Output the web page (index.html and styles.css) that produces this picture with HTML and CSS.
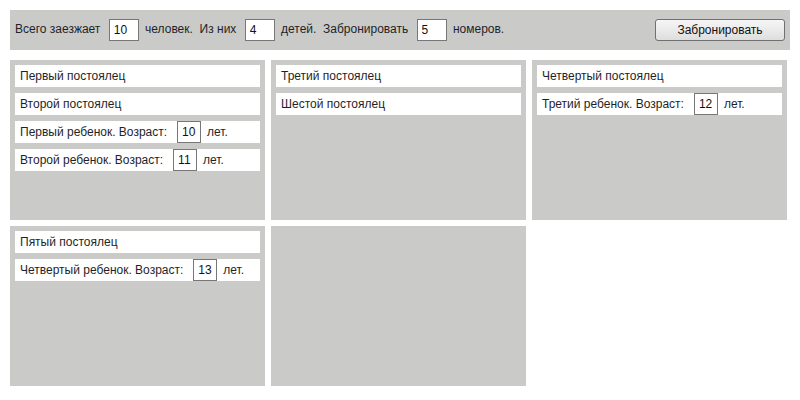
FILE: index.html
```html
<!DOCTYPE html>
<html lang="ru">

<head>
    <meta charset="UTF-8">
    <title>Бронирование</title>
    <link rel="stylesheet" href="styles.css">
</head>

<body>

    <div class="topbar">
        <div class="summary">
            Всего заезжает <input type="text" class="count" value="10"> человек.&nbsp; Из них
            <input type="text" class="count" value="4"> детей.&nbsp; Забронировать
            <input type="text" class="count" value="5"> номеров.
        </div>
        <button class="book">Забронировать</button>
    </div>

    <div class="rooms">
        <div class="room">
            <div class="guest">Первый постоялец</div>
            <div class="guest">Второй постоялец</div>
            <div class="guest">Первый ребенок. Возраст: <input type="text" class="age" value="10"> лет.</div>
            <div class="guest">Второй ребенок. Возраст: <input type="text" class="age" value="11"> лет.</div>
        </div>
        <div class="room">
            <div class="guest">Третий постоялец</div>
            <div class="guest">Шестой постоялец</div>
        </div>
        <div class="room">
            <div class="guest">Четвертый постоялец</div>
            <div class="guest">Третий ребенок. Возраст: <input type="text" class="age" value="12"> лет.</div>
        </div>
        <div class="room">
            <div class="guest">Пятый постоялец</div>
            <div class="guest">Четвертый ребенок. Возраст: <input type="text" class="age" value="13"> лет.</div>
        </div>
        <div class="room"></div>
    </div>

</body>

</html>
```

FILE: styles.css
```css
* {
    box-sizing: border-box;
}

body {
    margin: 10px;
    background-color: #fff;
    color: #1f1f2a;
    font-family: "Liberation Sans", Arial, sans-serif;
    font-size: 12px;
}

input {
    font-family: "Liberation Sans", Arial, sans-serif;
    font-size: 12px;
    color: #111;
    height: 22px;
    padding: 0 4px;
    border: 1px solid #777;
    background-color: #fff;
    outline: none;
    vertical-align: middle;
}

.topbar {
    display: flex;
    justify-content: space-between;
    align-items: center;
    width: 780px;
    height: 40px;
    padding: 0 5px;
    background-color: #cacbc8;
}

.summary .count {
    width: 30px;
    margin: 0 3px 0 5px;
}

.book {
    width: 130px;
    height: 22px;
    font-family: "Liberation Sans", Arial, sans-serif;
    font-size: 12px;
    color: #111;
    border: 1px solid #707070;
    border-radius: 3px;
    background: linear-gradient(#f6f6f6, #dedede);
    cursor: pointer;
}

.rooms {
    display: grid;
    grid-template-columns: repeat(3, 255px);
    grid-auto-rows: 160px;
    gap: 6px;
    margin-top: 10px;
}

.room {
    display: flex;
    flex-direction: column;
    gap: 6px;
    padding: 5px;
    background-color: #cacbc8;
}

.guest {
    display: flex;
    align-items: center;
    height: 22px;
    padding: 0 5px;
    background-color: #fff;
}

.guest .age {
    width: 24px;
    margin: 0 6px 0 10px;
}
```
